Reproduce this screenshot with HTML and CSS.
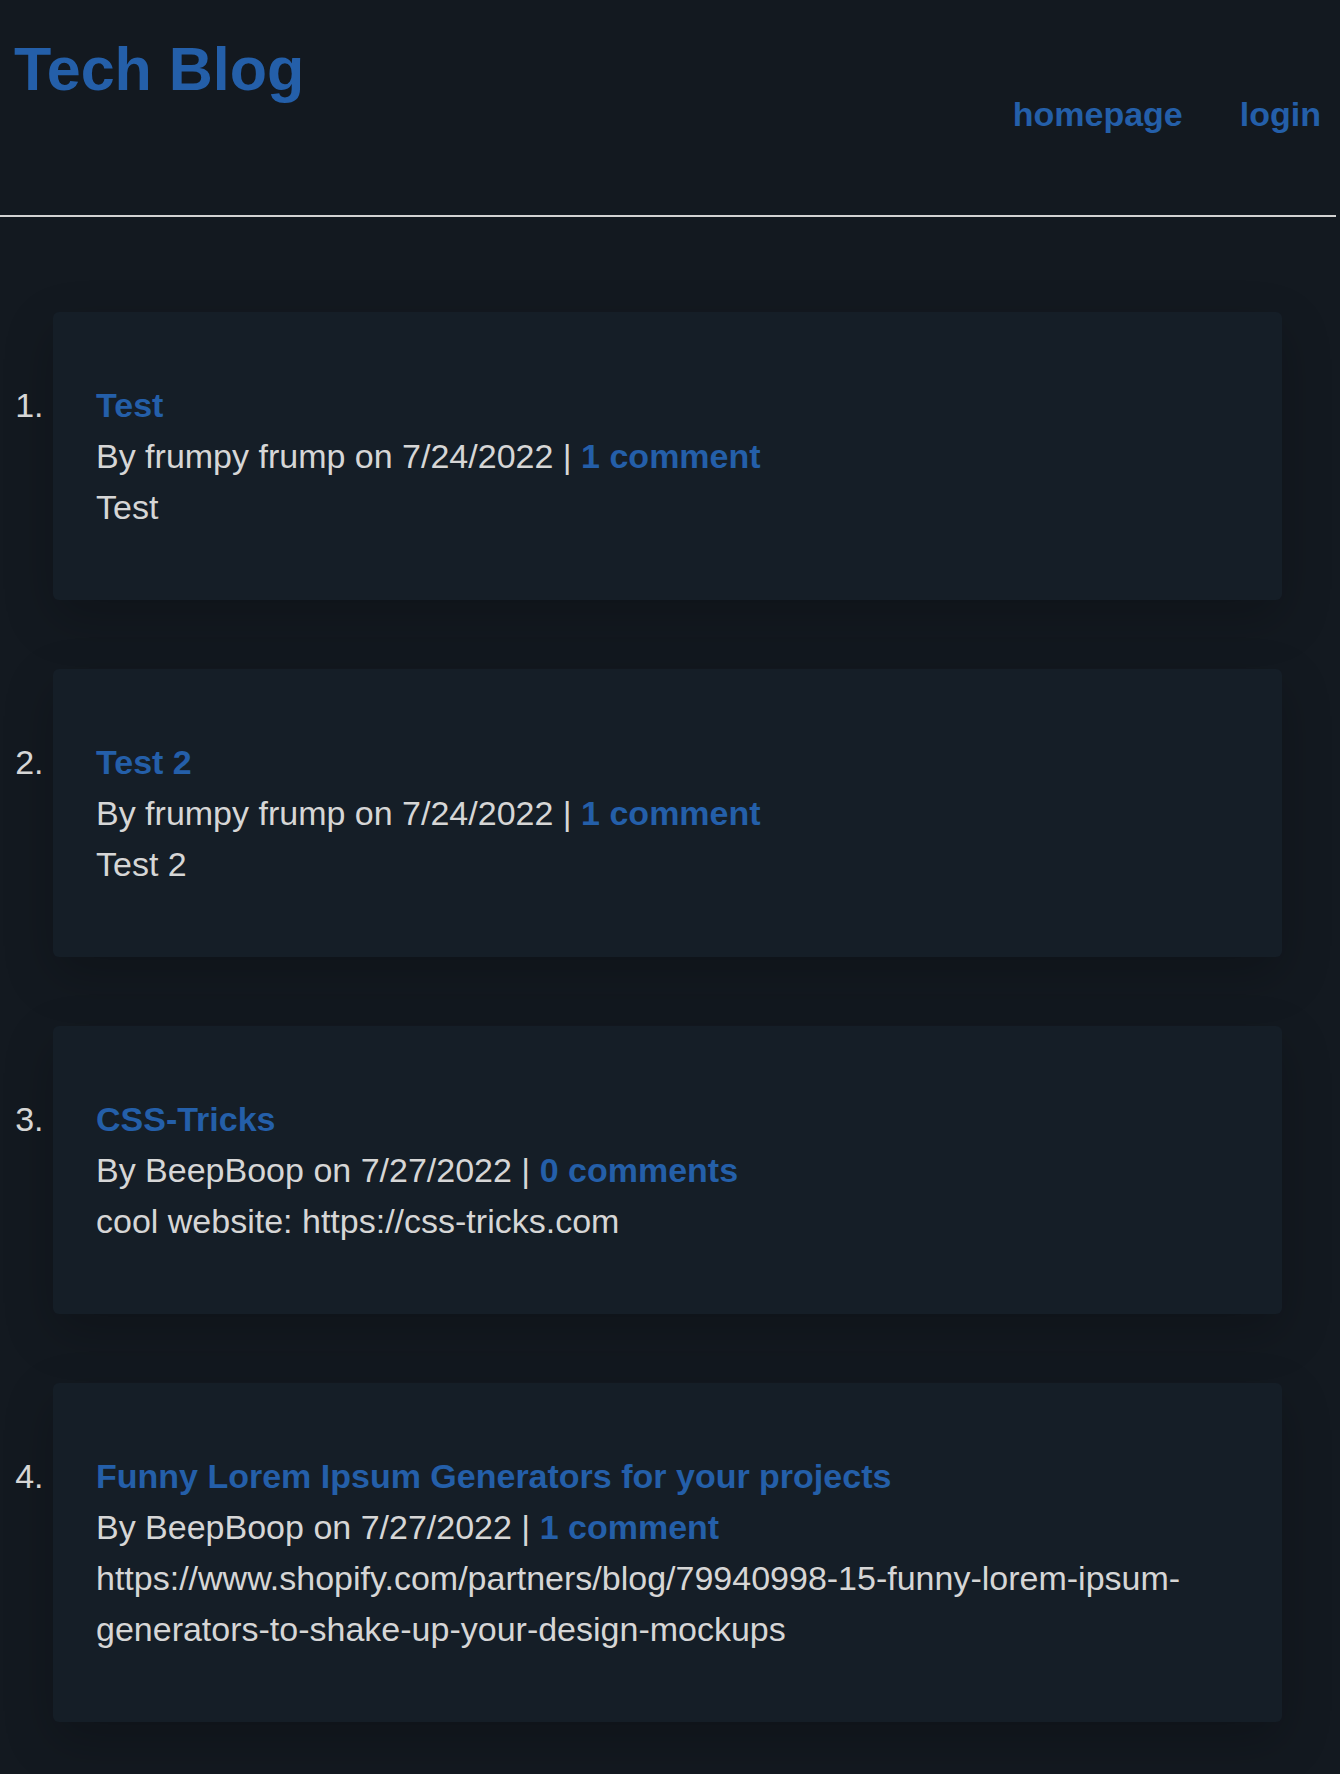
FILE: index.html
```html
<!DOCTYPE html>
<html lang="en">
<head>
<meta charset="utf-8">
<title>Tech Blog</title>
<link rel="stylesheet" href="styles.css">
</head>
<body>
<header class="site-header">
  <h1 class="brand">Tech Blog</h1>
  <nav class="nav">
    <a class="nav-link" href="#">homepage</a>
    <a class="nav-link" href="#">login</a>
  </nav>
</header>
<main>
  <ol class="posts">
    <li class="post">
      <a class="post-title" href="#">Test</a>
      <div class="post-meta">By frumpy frump on 7/24/2022 | <a class="post-comments" href="#">1 comment</a></div>
      <div class="post-body">Test</div>
    </li>
    <li class="post">
      <a class="post-title" href="#">Test 2</a>
      <div class="post-meta">By frumpy frump on 7/24/2022 | <a class="post-comments" href="#">1 comment</a></div>
      <div class="post-body">Test 2</div>
    </li>
    <li class="post">
      <a class="post-title" href="#">CSS-Tricks</a>
      <div class="post-meta">By BeepBoop on 7/27/2022 | <a class="post-comments" href="#">0 comments</a></div>
      <div class="post-body">cool website: https://css-tricks.com</div>
    </li>
    <li class="post">
      <a class="post-title" href="#">Funny Lorem Ipsum Generators for your projects</a>
      <div class="post-meta">By BeepBoop on 7/27/2022 | <a class="post-comments" href="#">1 comment</a></div>
      <div class="post-body">https://www.shopify.com/partners/blog/79940998-15-funny-lorem-ipsum-generators-to-shake-up-your-design-mockups</div>
    </li>
  </ol>
</main>
</body>
</html>
```
FILE: styles.css
```css
html, body {
  margin: 0;
  padding: 0;
}

body {
  background: #131920;
  color: #d6d6d6;
  font-family: "Liberation Sans", Arial, Helvetica, sans-serif;
  font-size: 34px;
  line-height: 51px;
  min-height: 1774px;
}

a {
  color: #245fa9;
  text-decoration: none;
  font-weight: bold;
}

.site-header {
  width: 1336px;
  height: 215px;
  border-bottom: 2px solid #d2d2d2;
  box-sizing: content-box;
  display: flex;
  justify-content: space-between;
  align-items: flex-start;
}

.brand {
  margin: 0;
  padding: 34px 0 0 14px;
  font-size: 61px;
  line-height: 70px;
  font-weight: bold;
  color: #245fa9;
}

.nav {
  display: flex;
  gap: 57px;
  margin-top: 89px;
  padding-right: 15px;
}

.posts {
  list-style: decimal outside;
  margin: 95px 0 0 0;
  padding: 0 58px 50px 53px;
  display: flex;
  flex-direction: column;
  gap: 69px;
}

.post {
  background: #151e27;
  border-radius: 6px;
  padding: 68px 43px 67px 43px;
  box-shadow: 0 18px 50px rgba(0, 0, 0, 0.22);
}

.post::marker {
  color: #d6d6d6;
}

.post-title {
  display: block;
}

.post-meta,
.post-body {
  display: block;
}
```
